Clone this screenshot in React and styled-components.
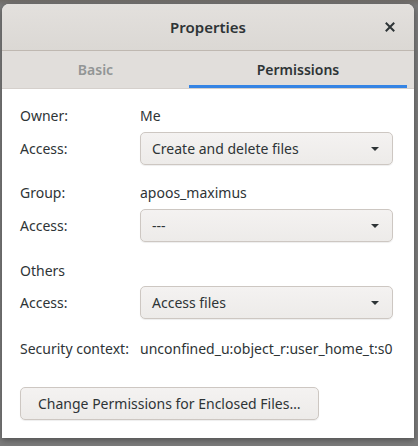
import React from 'react'
import styled, { createGlobalStyle } from 'styled-components'

const Global = createGlobalStyle`
    html, body {
        margin : 0;
        padding : 0;
    }
    body {
        width : 418px;
        height : 446px;
        overflow : hidden;
        background : linear-gradient(180deg, #6e6a66 0px, #7a7a7a 6px, #7b7b7b 100%);
        font-family : "Noto Sans", "DejaVu Sans", sans-serif;
        color : #2e3436;
    }
`

const Window = styled.div`
    margin : 4px 0 0 2px;
    width : 412px;
    height : 434px;
    background : #ffffff;
    border-radius : 7px 7px 0 0;
    overflow : hidden;
    display : flex;
    flex-direction : column;
    box-shadow : 0 2px 6px rgba(0, 0, 0, 0.35);
`

const TitleBar = styled.div`
    height : 46px;
    flex-shrink : 0;
    display : flex;
    align-items : center;
    justify-content : center;
    position : relative;
    background : linear-gradient(180deg, #e3e0dd, #dbd8d4);
    border-bottom : 1px solid #bfb8b1;
    font-size : 15px;
    font-weight : 600;
`

const Close = styled.div`
    position : absolute;
    right : 19px;
    top : 18px;
    width : 10px;
    height : 10px;
    display : flex;
`

const Tabs = styled.div`
    height : 37px;
    flex-shrink : 0;
    display : flex;
    background : #e1dedb;
    border-bottom : 1px solid #d5d0cc;
`

const Tab = styled.div`
    width : ${p => p.w}px;
    display : flex;
    align-items : center;
    justify-content : center;
    font-size : 14px;
    font-weight : 600;
    color : ${p => p.active ? '#2e3436' : '#929595'};
    box-shadow : ${p => p.active ? 'inset 0 -3px 0 #3584e4' : 'none'};
`

const Content = styled.div`
    padding : 17px 22px 0 18px;
    display : grid;
    grid-template-columns : 120px 1fr;
    align-items : center;
    font-size : 14px;
`

const Label = styled.div`
    height : 20px;
    line-height : 20px;
    margin-top : ${p => p.gap || 0}px;
`

const Value = styled.div`
    height : 20px;
    line-height : 20px;
    margin-top : ${p => p.gap || 0}px;
    white-space : nowrap;
`

const Combo = styled.div`
    height : 31px;
    margin-top : ${p => p.gap || 0}px;
    border : 1px solid #cdc7c2;
    border-radius : 5px;
    background : linear-gradient(180deg, #f4f2f1, #edebe9);
    box-shadow : 0 1px 1px rgba(0, 0, 0, 0.07);
    display : flex;
    align-items : center;
    justify-content : space-between;
    padding : 0 13px 0 11px;
`

const Arrow = styled.div`
    width : 0;
    height : 0;
    border-left : 4px solid transparent;
    border-right : 4px solid transparent;
    border-top : 4px solid #2e3436;
`

const Footer = styled.div`
    grid-column : 1 / span 2;
    margin-top : 28px;
`

const Button = styled.div`
    display : inline-flex;
    align-items : center;
    height : 31px;
    padding : 0 18px 0 17px;
    border : 1px solid #cdc7c2;
    border-radius : 5px;
    background : linear-gradient(180deg, #f4f2f1, #edebe9);
    box-shadow : 0 1px 1px rgba(0, 0, 0, 0.07);
    font-size : 14px;
`

const Select = ({ children, gap }) => (
    <Combo gap={gap}>
        <span>{children}</span>
        <Arrow />
    </Combo>
)

const App = () => {
    return (
        <>
            <Global />
            <Window>
                <TitleBar>
                    Properties
                    <Close>
                        <svg width="10" height="10" viewBox="0 0 10 10">
                            <path d="M1.5 1.5 L8.5 8.5 M8.5 1.5 L1.5 8.5" stroke="#2e3436" strokeWidth="2" strokeLinecap="square" />
                        </svg>
                    </Close>
                </TitleBar>
                <Tabs>
                    <Tab w={187}>Basic</Tab>
                    <Tab w={218} active>Permissions</Tab>
                </Tabs>
                <Content>
                    <Label>Owner:</Label>
                    <Value>Me</Value>
                    <Label gap={6}>Access:</Label>
                    <Select gap={6}>Create and delete files</Select>

                    <Label gap={18}>Group:</Label>
                    <Value gap={18}>apoos_maximus</Value>
                    <Label gap={6}>Access:</Label>
                    <Select gap={6}>---</Select>

                    <Label gap={19}>Others</Label>
                    <div />
                    <Label gap={5}>Access:</Label>
                    <Select gap={5}>Access files</Select>

                    <Label gap={20}>Security context:</Label>
                    <Value gap={20}>unconfined_u:object_r:user_home_t:s0</Value>

                    <Footer>
                        <Button>Change Permissions for Enclosed Files…</Button>
                    </Footer>
                </Content>
            </Window>
        </>
    )
}

export default App
